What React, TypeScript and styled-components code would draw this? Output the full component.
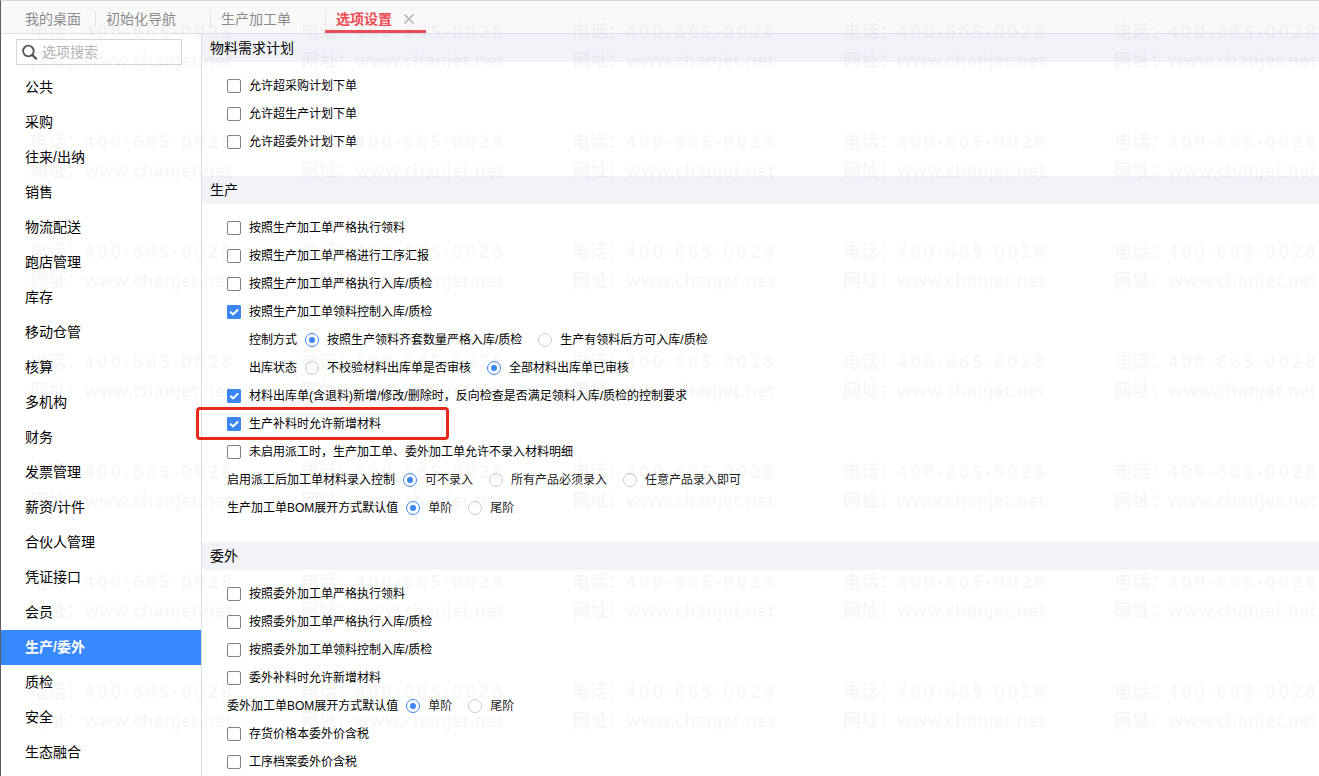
import React from 'react';
import styled, { createGlobalStyle } from 'styled-components';

const GlobalStyle = createGlobalStyle`
  * { box-sizing: border-box; }
  body { margin: 0; background: #fff; }
  body, button, input {
    font-family: "Liberation Sans", "Noto Sans CJK SC", sans-serif;
    color: #000;
  }
`;

const Page = styled.div`
  position: relative;
  min-height: 100vh;
  display: flex;
  flex-direction: column;
  border-left: 1px solid #5c5c5c;
  border-top: 1px solid #d6d6d6;
  overflow: hidden;
`;

const TabBar = styled.nav`
  display: flex;
  height: 33px;
  background: #f9f9f9;
  border-bottom: 1px solid #dfe2ee;
`;

const TabItem = styled.div<{ $active?: boolean; $closable?: boolean }>`
  position: relative;
  display: flex;
  align-items: center;
  gap: 12px;
  padding: 4px ${p => (p.$active ? 12 : p.$closable ? 34 : 14)}px 0 ${p => (p.$closable ? 11 : 24)}px;

  &::before {
    content: "";
    display: ${p => (p.$closable ? 'block' : 'none')};
    position: absolute;
    left: 0;
    top: 10px;
    width: 1px;
    height: 16px;
    background: #e2e2e2;
  }
  &::after {
    content: "";
    display: ${p => (p.$active ? 'block' : 'none')};
    position: absolute;
    left: 0;
    right: 0;
    bottom: 0;
    height: 3px;
    background: #ee4c55;
  }
`;

const TabButton = styled.button<{ $active?: boolean }>`
  border: 0;
  padding: 0;
  background: none;
  font-size: 14px;
  line-height: 20px;
  white-space: nowrap;
  font-weight: ${p => (p.$active ? 700 : 400)};
  color: ${p => (p.$active ? '#ee4c55' : '#8c8c8c')};
`;

const CloseButton = styled.button`
  display: flex;
  border: 0;
  padding: 0;
  background: none;
  color: #b0b0b0;
`;

const Body = styled.div`
  flex: 1;
  display: flex;
`;

const Sidebar = styled.aside`
  flex: 0 0 201px;
  min-width: 0;
  border-right: 1px solid #dcdcdc;
`;

const SearchBox = styled.label`
  display: flex;
  align-items: center;
  gap: 4px;
  height: 26px;
  margin: 5px 19px 5px 15px;
  padding-left: 5px;
  border: 1px solid #d4d6da;
  color: #555;

  svg { flex: none; }
`;

const SearchInput = styled.input`
  flex: 1;
  width: 100%;
  min-width: 0;
  border: 0;
  padding: 0;
  outline: 0;
  background: none;
  font-size: 14px;
  line-height: 20px;

  &::placeholder { color: #b4b4b4; opacity: 1; }
`;

const Menu = styled.ul`
  margin: 0;
  padding: 0;
  list-style: none;
`;

const MenuLink = styled.a<{ $active: boolean }>`
  display: block;
  padding-left: 24px;
  font-size: 14px;
  line-height: 35px;
  text-decoration: none;
  font-weight: ${p => (p.$active ? 700 : 400)};
  color: ${p => (p.$active ? '#fff' : '#000')};
  background: ${p => (p.$active ? '#3888ff' : 'transparent')};
`;

const Main = styled.main`
  flex: 1;
  min-width: 0;
`;

const Section = styled.section`
  padding-bottom: 20px;
  &:last-child { padding-bottom: 0; }
`;

const SectionTitle = styled.h2`
  margin: 0 0 10px;
  padding-left: 8px;
  font-size: 14px;
  font-weight: 400;
  line-height: 28px;
  background: #f2f3f8;
`;

const Row = styled.div<{ $indent?: boolean }>`
  position: relative;
  display: flex;
  align-items: center;
  gap: 16px;
  height: 28px;
  padding-left: ${p => (p.$indent ? 47 : 25)}px;
  font-size: 12px;
  line-height: 28px;
  white-space: nowrap;
`;

const Group = styled.div`
  display: flex;
  align-items: center;
  gap: 8px;
`;

const Option = styled.label<{ $muted?: boolean }>`
  display: flex;
  align-items: center;
  gap: 8px;
  color: ${p => (p.$muted ? '#222' : '#000')};
`;

const Tick = styled.span`
  display: grid;
  width: 14px;
  height: 14px;

  > * { grid-area: 1 / 1; }
  svg { pointer-events: none; }
  input:not(:checked) + svg { display: none; }
`;

const TickInput = styled.input`
  appearance: none;
  margin: 0;
  width: 14px;
  height: 14px;
  border: 1px solid #808080;
  border-radius: 2px;
  background: #fff;

  &:checked { border-color: #3b86f4; border-radius: 1px; background: #3b86f4; }
`;

const RadioInput = styled.input`
  appearance: none;
  display: grid;
  place-items: center;
  margin: 0;
  width: 14px;
  height: 14px;
  border: 1px solid #cdcdcd;
  border-radius: 50%;
  background: #fff;

  &:checked { border-color: #3b86f4; }
  &:checked::before {
    content: "";
    width: 6px;
    height: 6px;
    border-radius: 50%;
    background: #3b86f4;
  }
`;

const Highlight = styled.span`
  position: absolute;
  left: -6px;
  top: -3px;
  width: 253px;
  height: 33px;
  border: 3px solid #e6291d;
  border-radius: 4px;
  pointer-events: none;
`;

const WatermarkLayer = styled.div`
  position: absolute;
  left: 29px;
  right: 0;
  top: 15px;
  bottom: 0;
  display: grid;
  grid-template-columns: repeat(5, 271px);
  grid-auto-rows: 110px;
  overflow: hidden;
  pointer-events: none;
  color: rgba(0, 0, 0, 0.055);
  font: 700 18px/29px "Noto Sans CJK SC", sans-serif;
  white-space: nowrap;
`;

const Latin = styled.span<{ $spaced?: boolean }>`
  font-family: "Noto Sans", sans-serif;
  font-weight: 600;
  line-height: 20px;
  letter-spacing: ${p => (p.$spaced ? '3px' : 'normal')};
`;

const MENU = [
  '公共', '采购', '往来/出纳', '销售', '物流配送', '跑店管理', '库存', '移动仓管', '核算', '多机构',
  '财务', '发票管理', '薪资/计件', '合伙人管理', '凭证接口', '会员', '生产/委外', '质检', '安全', '生态融合',
];

type RowData =
  | { kind: 'check'; text: string; checked?: boolean; marked?: boolean }
  | { kind: 'radio'; text: string; options: string[]; selected: number; indent?: boolean };

const check = (text: string, checked = false, marked = false): RowData => ({ kind: 'check', text, checked, marked });
const radio = (text: string, options: string[], selected: number, indent = false): RowData => ({
  kind: 'radio', text, options, selected, indent,
});

const SECTIONS: { title: string; rows: RowData[] }[] = [
  {
    title: '物料需求计划',
    rows: [check('允许超采购计划下单'), check('允许超生产计划下单'), check('允许超委外计划下单')],
  },
  {
    title: '生产',
    rows: [
      check('按照生产加工单严格执行领料'),
      check('按照生产加工单严格进行工序汇报'),
      check('按照生产加工单严格执行入库/质检'),
      check('按照生产加工单领料控制入库/质检', true),
      radio('控制方式', ['按照生产领料齐套数量严格入库/质检', '生产有领料后方可入库/质检'], 0, true),
      radio('出库状态', ['不校验材料出库单是否审核', '全部材料出库单已审核'], 1, true),
      check('材料出库单(含退料)新增/修改/删除时，反向检查是否满足领料入库/质检的控制要求', true),
      check('生产补料时允许新增材料', true, true),
      check('未启用派工时，生产加工单、委外加工单允许不录入材料明细'),
      radio('启用派工后加工单材料录入控制', ['可不录入', '所有产品必须录入', '任意产品录入即可'], 0),
      radio('生产加工单BOM展开方式默认值', ['单阶', '尾阶'], 0),
    ],
  },
  {
    title: '委外',
    rows: [
      check('按照委外加工单严格执行领料'),
      check('按照委外加工单严格执行入库/质检'),
      check('按照委外加工单领料控制入库/质检'),
      check('委外补料时允许新增材料'),
      radio('委外加工单BOM展开方式默认值', ['单阶', '尾阶'], 0),
      check('存货价格本委外价含税'),
      check('工序档案委外价含税'),
    ],
  },
];

function SettingRow({ row }: { row: RowData }) {
  if (row.kind === 'check') {
    return (
      <Row>
        <Option>
          <Tick>
            <TickInput type="checkbox" defaultChecked={row.checked} />
            <svg width="14" height="14" viewBox="0 0 14 14" fill="none" stroke="#fff" strokeWidth="2" strokeLinecap="round" strokeLinejoin="round">
              <path d="M3.8 7.2 6.2 9.4 10.6 5" />
            </svg>
          </Tick>
          {row.text}
        </Option>
        {row.marked && <Highlight />}
      </Row>
    );
  }
  return (
    <Row $indent={row.indent} role="radiogroup" aria-label={row.text}>
      {row.options.map((option, i) => (
        <Group key={option}>
          {i === 0 && <span>{row.text}</span>}
          <Option $muted={!row.indent}>
            <RadioInput type="radio" name={row.text} defaultChecked={i === row.selected} />
            {option}
          </Option>
        </Group>
      ))}
    </Row>
  );
}

export default function App() {
  return (
    <Page>
      <GlobalStyle />
      <TabBar>
        <TabItem><TabButton>我的桌面</TabButton></TabItem>
        <TabItem $closable><TabButton>初始化导航</TabButton></TabItem>
        <TabItem $closable><TabButton>生产加工单</TabButton></TabItem>
        <TabItem $closable $active>
          <TabButton $active>选项设置</TabButton>
          <CloseButton aria-label="关闭">
            <svg width="10" height="10" viewBox="0 0 10 10" fill="none" stroke="currentColor" strokeWidth="1.5">
              <path d="M0.5 0.5 9.5 9.5M9.5 0.5 0.5 9.5" />
            </svg>
          </CloseButton>
        </TabItem>
      </TabBar>
      <Body>
        <Sidebar>
          <SearchBox>
            <svg width="16" height="16" viewBox="0 0 16 16" fill="none" stroke="currentColor" strokeWidth="1.8">
              <circle cx="6.4" cy="7" r="5.3" />
              <path d="M10.3 10.9 14.6 15.2" strokeWidth="2.2" />
            </svg>
            <SearchInput type="text" placeholder="选项搜索" aria-label="选项搜索" />
          </SearchBox>
          <Menu>
            {MENU.map(name => (
              <li key={name}>
                <MenuLink href="#" $active={name === '生产/委外'}>{name}</MenuLink>
              </li>
            ))}
          </Menu>
        </Sidebar>
        <Main>
          {SECTIONS.map(section => (
            <Section key={section.title}>
              <SectionTitle>{section.title}</SectionTitle>
              {section.rows.map(row => <SettingRow key={row.text} row={row} />)}
            </Section>
          ))}
        </Main>
      </Body>
      <WatermarkLayer aria-hidden="true">
        {Array.from({ length: 35 }, (_, i) => (
          <div key={i}>
            <div>电话：<Latin $spaced>400-665-0028</Latin></div>
            <div>网址：<Latin>www.chanjet.net</Latin></div>
          </div>
        ))}
      </WatermarkLayer>
    </Page>
  );
}
